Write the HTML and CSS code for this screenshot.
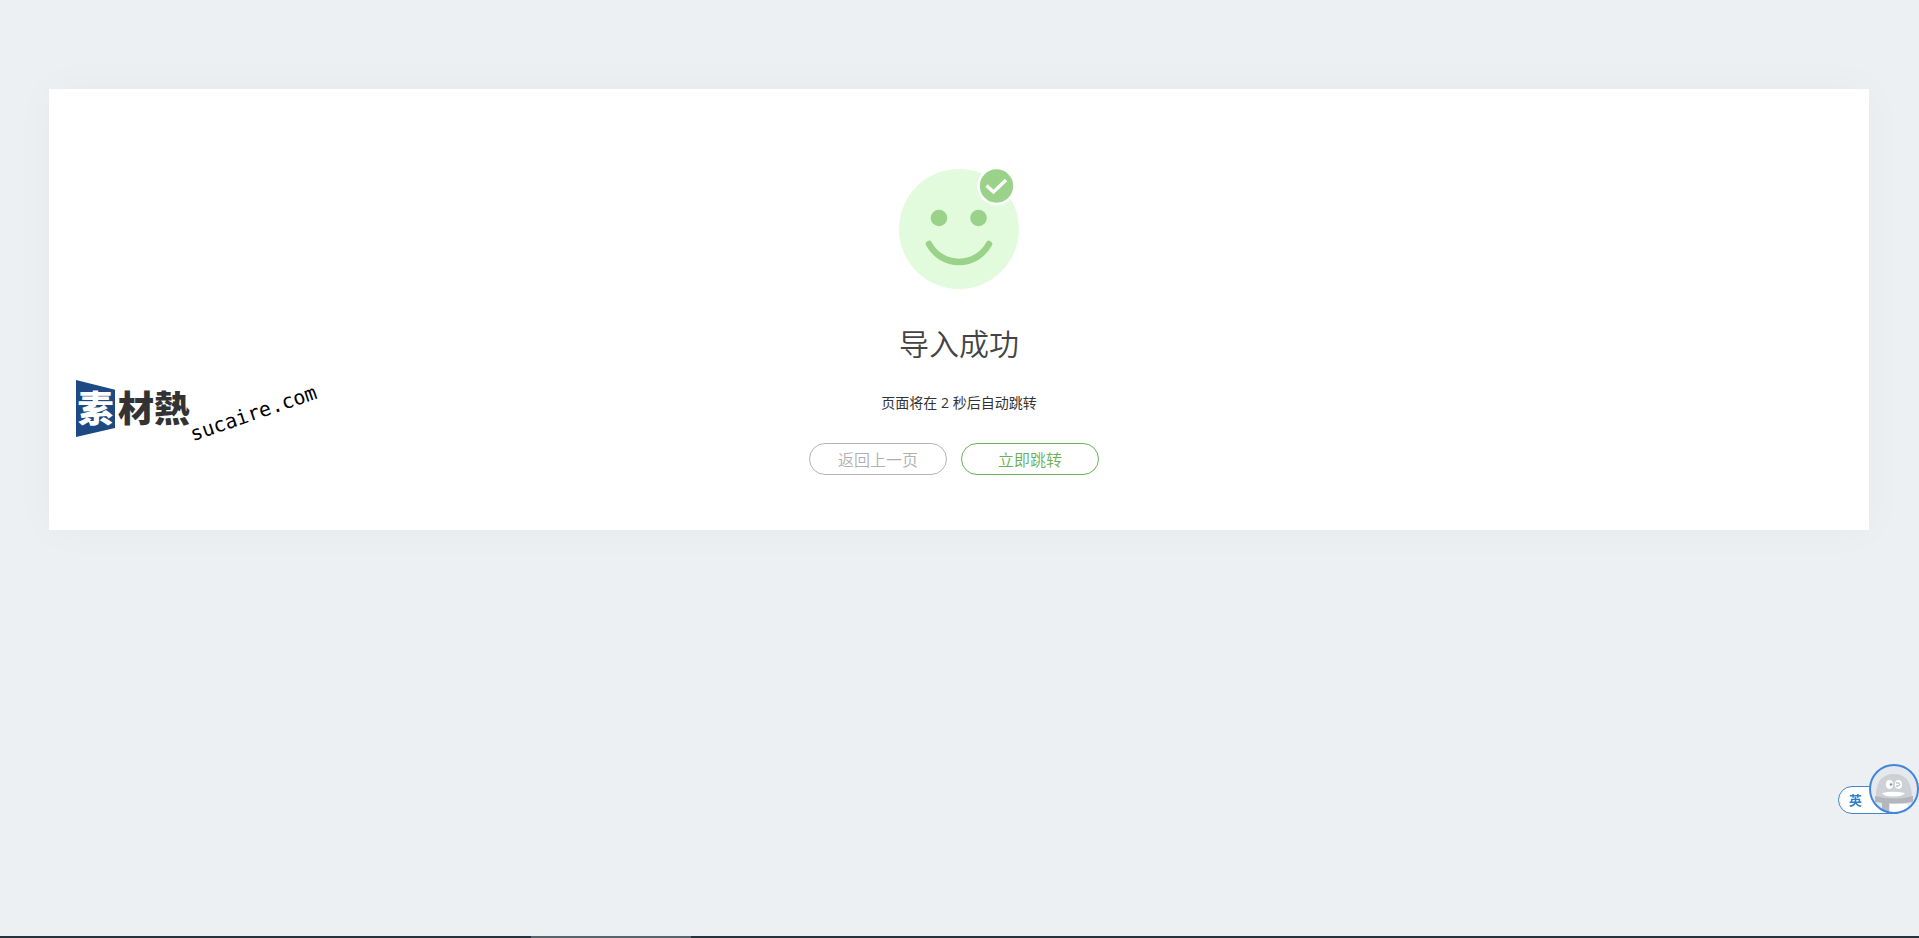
FILE: index.html
```html
<!DOCTYPE html>
<html lang="zh-CN">
<head>
    <meta charset="utf-8">
    <title>导入成功</title>
    <link rel="stylesheet" href="styles.css">
</head>

<body>
    <div class="success-box">
        <svg class="face" viewBox="0 0 120 120">
            <circle cx="60" cy="60" r="60" fill="#e1fbdc"/>
            <circle cx="40" cy="49" r="8.3" fill="#99d288"/>
            <circle cx="79.5" cy="49" r="8.3" fill="#99d288"/>
            <path d="M30 75A34 34 0 0 0 90 75" fill="none" stroke="#99d288" stroke-width="6.5" stroke-linecap="round"/>
            <circle cx="97.5" cy="17" r="18" fill="#99d288" stroke="#fff" stroke-width="2.6"/>
            <path d="M87.5 16.5L94.5 23L107 11" fill="none" stroke="#fff" stroke-width="3.4"/>
        </svg>
        <h1>导入成功</h1>
        <p>页面将在 2 秒后自动跳转</p>
        <div class="buttons">
            <button type="button" class="back-button">返回上一页</button>
            <button type="button" class="jump-button">立即跳转</button>
        </div>

        <div class="watermark">
            <span class="mark-first">素</span>
            <span class="mark-rest">材熱</span>
            <span class="mark-site">sucaire.com</span>
        </div>
    </div>

    <div class="ime">
        <button type="button" class="ime-lang">英</button>
        <svg class="ime-face" viewBox="0 0 50 50">
            <defs>
                <clipPath id="ring"><circle cx="25" cy="25" r="24"/></clipPath>
            </defs>
            <circle cx="25" cy="25" r="24" fill="#e5e9ed"/>
            <g clip-path="url(#ring)">
                <path d="M7 35C6 17 14 10 25 10S43 17 43 35Z" fill="#cdd0d5"/>
                <path d="M6 32Q25 37 44 32V38Q25 41 6 38Z" fill="#b3b6bc"/>
                <path d="M13 38H20V50H13Z" fill="#b3b6bc"/>
                <path d="M21 40H39V50H21Z" fill="#fff"/>
                <ellipse cx="20.5" cy="20.5" rx="3.6" ry="4.4" fill="#fff"/>
                <ellipse cx="29.5" cy="20.5" rx="3.6" ry="4.4" fill="#fff"/>
                <circle cx="22" cy="20.5" r="1.3" fill="#8d929a"/>
                <path d="M27 19Q30 18 31 20.5Q29 23 27 22" fill="none" stroke="#a5a9b0"/>
                <path d="M13 29Q24 26.5 36 29Q34 32.5 24 32.5Q15 32.5 13 29Z" fill="#fff"/>
            </g>
            <circle cx="25" cy="25" r="24" fill="none" stroke="#4186dd" stroke-width="2"/>
        </svg>
    </div>

    <div class="taskbar"><div class="taskbar-item"></div></div>
</body>
</html>
```

FILE: styles.css
```css
*{
    margin: 0;
    padding: 0;
    box-sizing: border-box;
}

body {
    min-height: 100vh;
    padding: 89px 50px 0 49px;
    background: #edf0f2;
    font-family: "Liberation Sans", "Noto Sans CJK SC", sans-serif;
    color: #333;
}

.success-box {
    position: relative;
    padding: 80px 0 55px;
    background: #fff;
    box-shadow: 0 0 40px rgba(0, 30, 40, 0.03);
    text-align: center;
}
.success-box h1 {
    margin-top: 33px;
    font-size: 30px;
    line-height: 46px;
    font-weight: 350;
    color: #444;
}
.success-box p {
    margin-top: 25px;
    font-family: "Open Sans", "Noto Sans CJK SC", sans-serif;
    font-size: 14px;
    line-height: 20px;
}
.face {
    display: block;
    width: 120px;
    height: 120px;
    margin: 0 auto;
    overflow: visible;
}

.buttons {
    display: flex;
    justify-content: center;
    gap: 14px;
    margin-top: 30px;
    padding-right: 10px;
}
.buttons button {
    width: 138px;
    height: 32px;
    border-radius: 16px;
    background: #fff;
    font-family: "Noto Sans CJK SC", sans-serif;
    font-size: 16px;
    font-weight: 350;
    line-height: 28px;
    cursor: pointer;
}
.back-button {
    border: 1px solid #b5b5b5;
    color: #b0b0b0;
}
.jump-button {
    border: 1px solid #68b055;
    color: #68b055;
}

/* site mark lying over the box */
.watermark {
    position: absolute;
    left: 27px;
    top: 291px;
    display: flex;
    align-items: flex-start;
    font-family: "Noto Sans CJK TC", sans-serif;
    font-size: 36px;
    font-weight: 900;
    line-height: 52px;
}
.mark-first {
    width: 39px;
    height: 57px;
    background: #1d4a82;
    clip-path: polygon(0 0, 100% 17%, 100% 84%, 0 100%);
    color: #fff;
}
.mark-rest {
    margin-left: 3px;
    color: #333;
}
.mark-site {
    margin: 44px 0 0 4px;
    font-family: "DejaVu Sans Mono", monospace;
    font-size: 20px;
    font-weight: normal;
    line-height: 20px;
    color: #000;
    transform: rotate(-19deg);
    transform-origin: 0 100%;
}

.ime {
    position: fixed;
    right: 0;
    bottom: 124px;
    display: flex;
    align-items: flex-end;
}
.ime-lang {
    width: 60px;
    height: 28px;
    margin-right: -29px;
    padding-left: 10px;
    border: 1px solid #4186c8;
    border-radius: 14px 0 0 14px;
    background: #fff;
    color: #2f7fc4;
    font-family: "Noto Sans CJK SC", sans-serif;
    font-size: 13px;
    font-weight: bold;
    line-height: 24px;
    text-align: left;
}
.ime-face {
    position: relative;
    width: 50px;
    height: 50px;
}

.taskbar {
    position: fixed;
    left: 0;
    bottom: 0;
    width: 100%;
    height: 2px;
    background: #26323f;
}
.taskbar-item {
    width: 160px;
    height: 2px;
    margin-left: 531px;
    background: #59636c;
}
```
